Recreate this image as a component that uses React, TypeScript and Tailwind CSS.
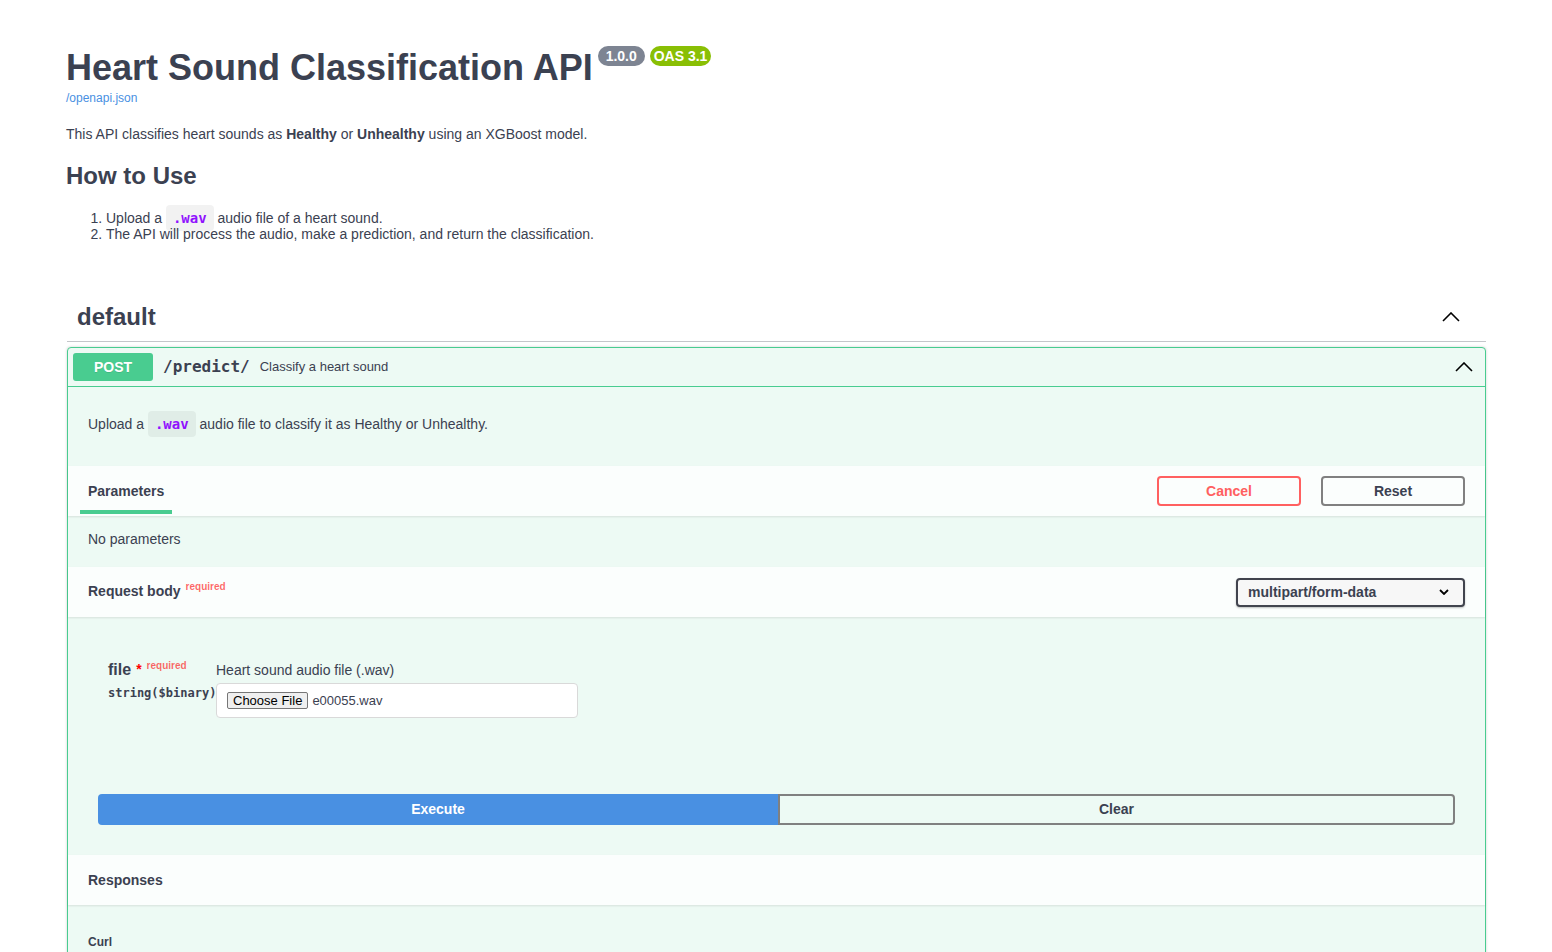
import React from 'react'

const mono = "font-['DejaVu_Sans_Mono','Liberation_Mono',monospace]"

function Chevron({ className }: { className?: string }) {
  return (
    <svg width="18" height="10" viewBox="0 0 18 10" className={className}>
      <polyline points="1,9 9,1 17,9" fill="none" stroke="#000" strokeWidth="1.6" />
    </svg>
  )
}

function WavCode() {
  return (
    <code className={`${mono} rounded bg-black/5 px-[7px] py-[5px] text-[14px] font-semibold text-[#9012fe]`}>
      .wav
    </code>
  )
}

export default function App() {
  return (
    <div className="h-[952px] overflow-hidden bg-white font-['Liberation_Sans',Arial,sans-serif] text-[#3b4151]">
      <div className="mx-auto max-w-[1460px] pl-[21px] pr-5">
        {/* info */}
        <div className="-ml-px pt-[47px]">
          <div className="flex items-start">
            <h2 className="text-[36px] font-bold leading-[41px]">Heart Sound Classification API</h2>
            <span className="-mt-px ml-[5px] h-5 whitespace-pre rounded-full bg-[#7d8492] px-1 text-[14px] font-bold leading-5 text-white">
              {' 1.0.0 '}
            </span>
            <span className="-mt-px ml-[5px] h-5 rounded-full bg-[#89bf04] px-1 text-[14px] font-bold leading-5 text-white">
              OAS 3.1
            </span>
          </div>
          <a className="mt-[3px] block text-[12px] leading-[14px] text-[#4990e2]">/openapi.json</a>
          <p className="mt-[21px] text-[14px] leading-4">
            This API classifies heart sounds as <b>Healthy</b> or <b>Unhealthy</b> using an XGBoost model.
          </p>
          <h2 className="mt-5 text-[24px] font-bold leading-[28px]">How to Use</h2>
          <ol className="mt-5 list-decimal pl-10 text-[14px] leading-4">
            <li>
              Upload a <WavCode /> audio file of a heart sound.
            </li>
            <li>The API will process the audio, make a prediction, and return the classification.</li>
          </ol>
        </div>

        {/* tag section */}
        <div className="mt-[51px]">
          <h3 className="flex h-[49px] items-center justify-between border-b border-[#3b4151]/30 pl-[10px] pr-5">
            <span className="text-[24px] font-bold leading-[28px]">default</span>
            <Chevron className="mr-[6px]" />
          </h3>

          <div className="mt-[5px] rounded border border-[#49cc90] bg-[#edfaf4] shadow-[0_0_3px_rgba(0,0,0,0.19)]">
            {/* summary */}
            <div className="flex items-center border-b border-[#49cc90] p-[5px]">
              <span className="flex h-[28px] w-20 items-center justify-center rounded-[3px] bg-[#49cc90] text-[14px] font-bold text-white [text-shadow:0_1px_0_rgba(0,0,0,0.1)]">
                POST
              </span>
              <span className={`${mono} px-[10px] text-[16px] font-bold`}>/predict/</span>
              <span className="text-[13px]">Classify a heart sound</span>
              <Chevron className="ml-auto mr-[7px]" />
            </div>

            {/* description */}
            <div className="px-5 pb-[34px] pt-[29px] text-[14px] leading-4">
              Upload a <WavCode /> audio file to classify it as Healthy or Unhealthy.
            </div>

            {/* parameters header */}
            <div className="flex h-[50px] items-center justify-between bg-white/80 px-5 shadow-[0_1px_2px_rgba(0,0,0,0.1)]">
              <span className="relative text-[14px] font-bold leading-4">
                Parameters
                <span className="absolute left-[-10%] top-[27px] h-1 w-[120%] bg-[#49cc90]" />
              </span>
              <div className="flex gap-5">
                <button className="h-[30px] w-[144px] rounded border-2 border-[#ff6060] text-[14px] font-bold text-[#ff6060]">
                  Cancel
                </button>
                <button className="h-[30px] w-[144px] rounded border-2 border-[#808080] text-[14px] font-bold text-[#3b4151]">
                  Reset
                </button>
              </div>
            </div>

            <div className="h-[51px] px-5 pt-[15px] text-[14px] leading-4">No parameters</div>

            {/* request body header */}
            <div className="flex h-[50px] items-center justify-between bg-white/80 px-5 shadow-[0_1px_2px_rgba(0,0,0,0.1)]">
              <span className="text-[14px] font-bold leading-4">
                Request body
                <span className="relative top-[-6px] pl-[5px] text-[10px] font-bold text-[rgba(255,0,0,0.6)]">required</span>
              </span>
              <div className="flex h-[29px] w-[229px] items-center justify-between rounded border-2 border-[#41444e] bg-[#f7f7f7] px-[10px] text-[14px] font-bold shadow-[0_1px_2px_rgba(0,0,0,0.25)]">
                multipart/form-data
                <svg width="10" height="6" viewBox="0 0 10 6" className="mr-[4px]">
                  <polyline points="1,1 5,5 9,1" fill="none" stroke="#000" strokeWidth="1.8" />
                </svg>
              </div>
            </div>

            {/* request body */}
            <div className="pb-[30px] pt-[44px]">
              <div className="flex pl-10">
                <div className="w-[108px] shrink-0">
                  <div className="whitespace-nowrap text-[16px] font-bold leading-[18px]">
                    file
                    <span className="relative top-[-1px] pl-[5px] text-[14px] text-[#ff0000]">*</span>
                    <span className="relative top-[-6px] pl-[5px] text-[10px] text-[rgba(255,0,0,0.6)]">required</span>
                  </div>
                  <div className={`${mono} mt-[5px] whitespace-nowrap text-[12px] font-bold leading-[14px]`}>
                    string($binary)
                  </div>
                </div>
                <div>
                  <div className="mt-px text-[14px] leading-4">Heart sound audio file (.wav)</div>
                  <div className="mt-[5px] flex h-[35px] w-[362px] items-center rounded border border-[#d9d9d9] bg-white px-[10px]">
                    <span className="rounded-[2px] border border-[#767676] bg-[#efefef] px-[5px] text-[13px] leading-[15px] text-black">
                      Choose File
                    </span>
                    <span className="ml-[4px] text-[13px] text-[#3b4151]">e00055.wav</span>
                  </div>
                </div>
              </div>

              <div className="mx-[30px] mt-[76px] flex h-[31px]">
                <button className="w-[680px] rounded-l bg-[#4990e2] text-[14px] font-bold text-white">Execute</button>
                <button className="flex-1 rounded-r border-2 border-[#808080] text-[14px] font-bold text-[#3b4151]">
                  Clear
                </button>
              </div>
            </div>

            {/* responses */}
            <div className="flex h-[50px] items-center bg-white/80 px-5 shadow-[0_1px_2px_rgba(0,0,0,0.1)]">
              <span className="text-[14px] font-bold leading-4">Responses</span>
            </div>
            <div className="px-5 pb-10 pt-[30px]">
              <h4 className="text-[12px] font-bold leading-[14px]">Curl</h4>
            </div>
          </div>
        </div>
      </div>
    </div>
  )
}
